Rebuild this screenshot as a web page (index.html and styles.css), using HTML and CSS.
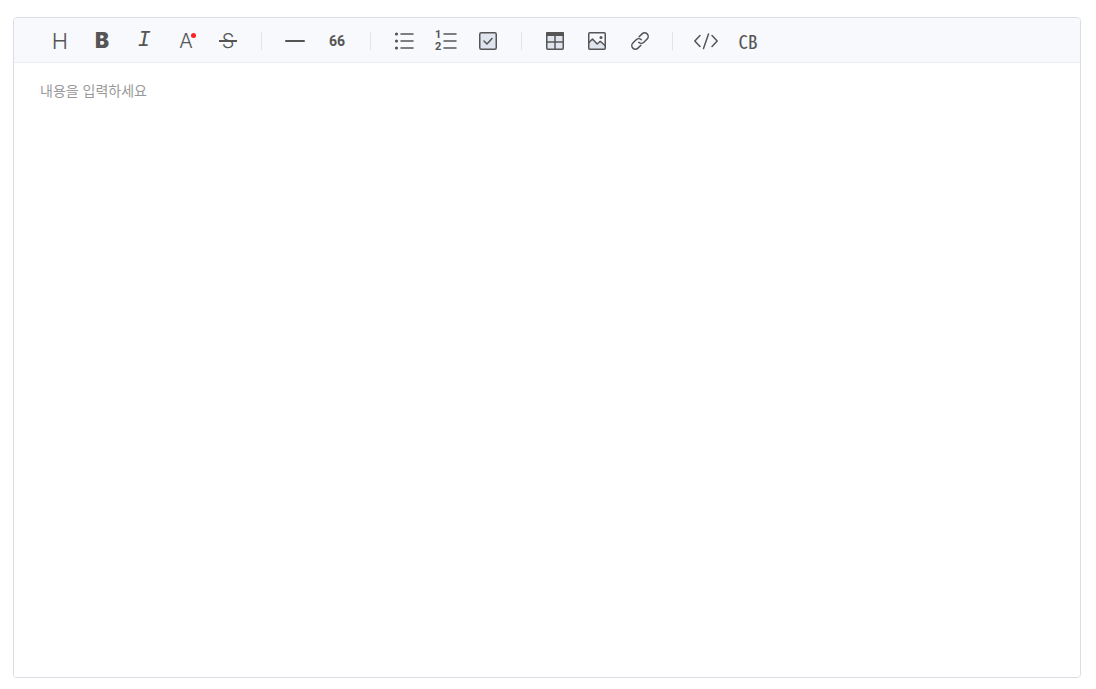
FILE: index.html
```html
<!DOCTYPE html>
<html lang="ko">
<head>
<meta charset="UTF-8">
<title>에디터</title>
<link rel="stylesheet" href="styles.css">
</head>
<body>
<div class="editor">
<div class="toolbar">
<button type="button" class="tool heading" aria-label="제목">H</button>
<button type="button" class="tool bold" aria-label="굵게">B</button>
<button type="button" class="tool italic" aria-label="기울임">I</button>
<button type="button" class="tool color" aria-label="글자 색상">A<span class="dot"></span></button>
<button type="button" class="tool strike" aria-label="취소선">S<span class="bar"></span></button>
<span class="divider"></span>
<button type="button" class="tool" aria-label="구분선">
<svg viewBox="0 0 32 32"><path class="rule" d="M7 16h18"/></svg>
</button>
<button type="button" class="tool quote" aria-label="인용구">66</button>
<span class="divider"></span>
<button type="button" class="tool" aria-label="글머리 기호">
<svg viewBox="0 0 32 32">
<path d="M13 9h12M13 16h12M13 23h12"/>
<g class="solid"><circle cx="8.500" cy="9" r="1.600"/><circle cx="8.500" cy="16" r="1.600"/><circle cx="8.500" cy="23" r="1.600"/></g>
</svg>
</button>
<button type="button" class="tool" aria-label="번호 매기기">
<svg viewBox="0 0 32 32">
<path d="M14 9h12M14 16h12M14 23h12"/>
<text class="num" x="5" y="13">1</text>
<text class="num" x="5" y="25">2</text>
</svg>
</button>
<button type="button" class="tool" aria-label="체크박스">
<svg viewBox="0 0 32 32">
<rect class="fill" x="7.750" y="7.750" width="16.500" height="16.500" rx="1.500"/>
<path d="M12 16l3 3 5-5.500"/>
</svg>
</button>
<span class="divider"></span>
<button type="button" class="tool" aria-label="표">
<svg viewBox="0 0 32 32">
<rect class="fill" x="7.750" y="7.750" width="16.500" height="16.500" rx="1"/>
<path class="solid" d="M7 8a1 1 0 0 1 1-1h16a1 1 0 0 1 1 1v3H7z"/>
<path d="M8 17h16M16 11v13"/>
</svg>
</button>
<button type="button" class="tool" aria-label="이미지">
<svg viewBox="0 0 32 32">
<path class="shade" d="M8 18l4-4 5 5 3-3 4 4v4H8z"/>
<rect x="7.750" y="7.750" width="16.500" height="16.500" rx="1"/>
<path d="M8 17.500l3.500-3.500 4.700 5 3-2.700 4.800 4.200"/>
<circle class="solid" cx="20" cy="12.500" r="1.500"/>
</svg>
</button>
<button type="button" class="tool" aria-label="링크">
<svg viewBox="0 0 32 32">
<g transform="rotate(-45 17 16)">
<path d="M14.700 19.600H10.500a3.600 3.600 0 0 1 0-7.200h4.700a3.600 3.600 0 0 1 3.600 3.600"/>
<path d="M19.300 12.400H23.500a3.600 3.600 0 0 1 0 7.200h-4.700a3.600 3.600 0 0 1-3.600-3.600"/>
</g>
</svg>
</button>
<span class="divider"></span>
<button type="button" class="tool" aria-label="인라인 코드">
<svg viewBox="0 0 32 32"><path d="M10 10.500L4.800 16l5.200 5.500M22 10.500l5.200 5.500-5.200 5.500M18.500 9l-5 14.500"/></svg>
</button>
<button type="button" class="tool codeblock" aria-label="코드 블록">CB</button>
</div>
<textarea class="contents" placeholder="내용을 입력하세요" aria-label="내용"></textarea>
</div>
</body>
</html>
```
FILE: styles.css
```css
*{
box-sizing: border-box;
}
body{
margin: 0;
padding: 17px 15px 11px 13px;
min-height: 100vh;
display: flex;
background: #fff;
font-family: "Noto Sans CJK KR", sans-serif;
}
.editor{
flex: 1;
display: flex;
flex-direction: column;
border: 1px solid #dadde6;
border-radius: 4px;
overflow: hidden;
}
.toolbar{
display: flex;
flex-wrap: wrap;
padding: 0 25px;
background: #f7f9fc;
border-bottom: 1px solid #ebedf2;
}
.tool{
position: relative;
display: flex;
align-items: center;
justify-content: center;
width: 32px;
height: 32px;
margin: 7px 5px 5px;
padding: 0;
border: none;
border-radius: 3px;
background: none;
color: #555;
line-height: 32px;
cursor: pointer;
}
.tool svg{
display: block;
width: 32px;
height: 32px;
fill: none;
stroke: #555;
stroke-width: 1.5;
stroke-linecap: round;
stroke-linejoin: round;
}
.tool .solid{
fill: #555;
stroke: none;
}
.tool .fill{
fill: #dfe4ee;
}
.tool .shade{
fill: #dfe4ee;
stroke: none;
}
.tool .rule{
stroke-width: 2;
}
.tool .num{
fill: #555;
stroke: none;
font: bold 11px Roboto, sans-serif;
}
.heading{
font-family: Inter, sans-serif;
font-size: 22px;
font-weight: 300;
}
.bold{
font-family: Inter, sans-serif;
font-size: 21px;
font-weight: 900;
}
.italic{
font-family: "Liberation Mono", monospace;
font-size: 22px;
font-style: italic;
}
.color{
font-family: Inter, sans-serif;
font-size: 20px;
font-weight: 300;
}
.strike{
font-family: Inter, sans-serif;
font-size: 20px;
font-weight: 300;
}
.quote{
font-family: Roboto, sans-serif;
font-size: 14px;
font-weight: bold;
}
.codeblock{
font-family: "Noto Sans Mono CJK KR", Roboto, sans-serif;
font-size: 19px;
}
.dot{
position: absolute;
top: 8px;
right: 6px;
width: 5px;
height: 5px;
border-radius: 50%;
background: #f22;
}
.bar{
position: absolute;
top: 15px;
left: 7px;
width: 18px;
height: 2px;
background: #555;
}
.divider{
width: 1px;
height: 18px;
margin: 14px 12px 12px;
background: #e1e3e9;
}
.contents{
flex: 1;
width: 100%;
padding: 17px 26px;
border: none;
outline: none;
resize: none;
background: #fff;
color: #222;
font-family: "Noto Sans CJK KR", sans-serif;
font-size: 14px;
font-weight: 400;
line-height: 21px;
}
.contents::placeholder{
color: #999;
opacity: 1;
}
```
